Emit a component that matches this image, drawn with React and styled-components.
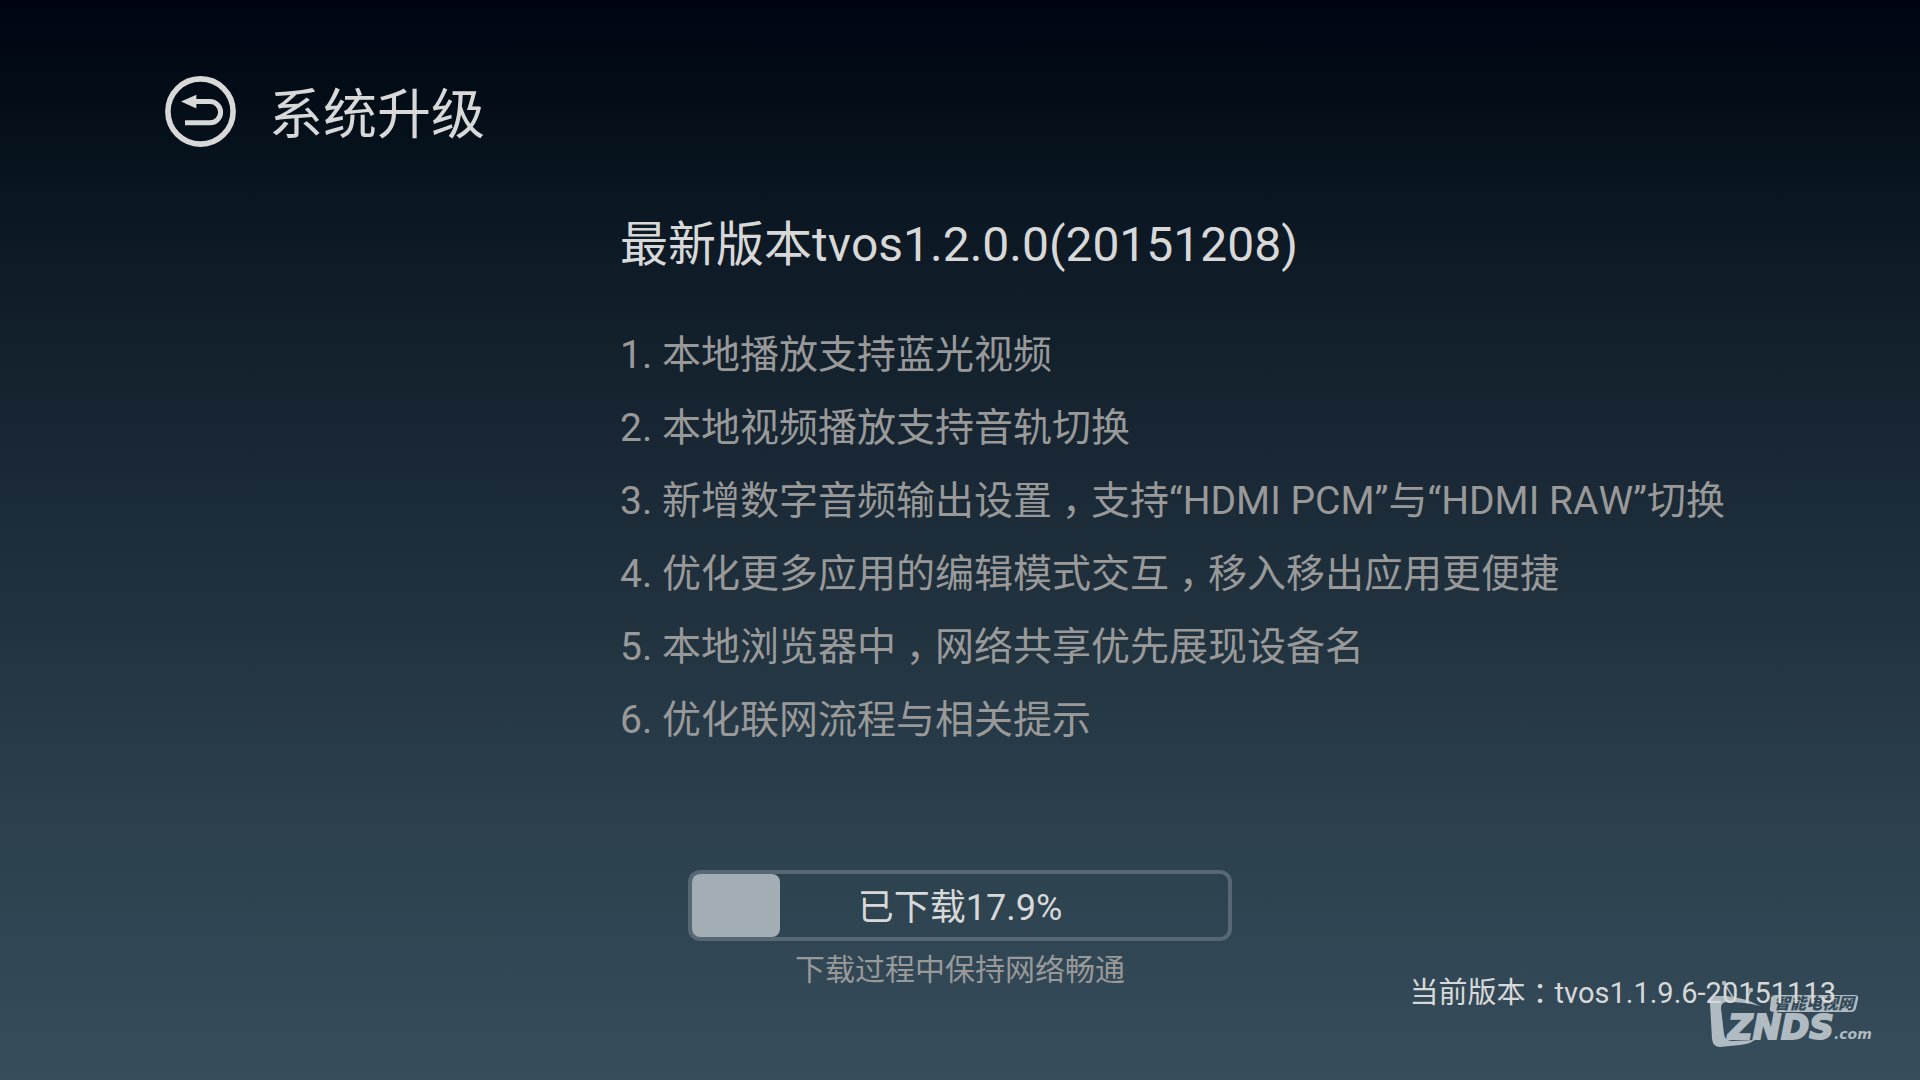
import React from "react";
import styled, { createGlobalStyle } from "styled-components";

const GlobalStyle = createGlobalStyle`
  * { box-sizing: border-box; }
  body {
    margin: 0;
    background: #000411;
    font-family: Roboto, "Noto Sans CJK SC", sans-serif;
    font-kerning: none;
    color: #d8d8d8;
  }
`;

const Screen = styled.div`
  position: relative;
  display: flex;
  flex-direction: column;
  min-height: 100vh;
  background: linear-gradient(
    #000412 0%,
    #030e18 10%,
    #0f1c28 25%,
    #1d2d39 50%,
    #2b3f4c 75%,
    #364d5b 100%
  );
`;

const Header = styled.header`
  display: flex;
  align-items: center;
  gap: 32px;
  padding: 72px 80px 0 164px;
`;

const BackButton = styled.button`
  display: flex;
  padding: 0;
  border: 0;
  background: none;
  color: inherit;
  cursor: pointer;
`;

const PageTitle = styled.h1`
  margin: 0;
  padding-top: 10px;
  font-size: 54px;
  font-weight: 400;
  line-height: 68px;
`;

const Release = styled.main`
  flex: 1;
  padding: 61px 80px 32px 620px;
`;

const ReleaseTitle = styled.h2`
  margin: 0 0 40px;
  font-size: 48px;
  font-weight: 400;
  line-height: 68px;
`;

const ChangeList = styled.ol`
  margin: 0;
  padding: 0;
  list-style: none;
  color: #999;
`;

const Change = styled.li`
  font-size: 39px;
  line-height: 73px;
`;

const WideMark = styled.span`
  display: inline-block;
  width: 1em;
  text-align: center;
  font-feature-settings: "halt";
`;

const Download = styled.section`
  display: flex;
  flex-direction: column;
  align-items: center;
  gap: 7px;
`;

const Track = styled.div`
  display: grid;
  width: 544px;
  height: 71px;
  border: 4px solid #576874;
  border-radius: 12px;
`;

const Fill = styled.div`
  grid-area: 1 / 1;
  border-radius: 8px;
  background: #a3adb4;
`;

const TrackLabel = styled.span`
  grid-area: 1 / 1;
  place-self: end center;
  font-size: 36px;
  line-height: 58px;
`;

const Hint = styled.p`
  margin: 0;
  font-size: 30px;
  line-height: 44px;
  color: #999;
`;

const Footer = styled.footer`
  display: flex;
  justify-content: flex-end;
  height: 88px;
  padding-right: 84px;
`;

const Version = styled.p`
  position: relative;
  z-index: 1;
  margin: -19px 0 0;
  font-size: 29px;
  line-height: 40px;
`;

const Watermark = styled.svg`
  position: absolute;
  right: 40px;
  bottom: 20px;
  overflow: visible;
`;

const changes = [
  "本地播放支持蓝光视频",
  "本地视频播放支持音轨切换",
  "新增数字音频输出设置，支持“HDMI PCM”与“HDMI RAW”切换",
  "优化更多应用的编辑模式交互，移入移出应用更便捷",
  "本地浏览器中，网络共享优先展现设备名",
  "优化联网流程与相关提示",
];

function Text({ children }) {
  return children
    .split(/([，：])/)
    .map((part, i) => (i % 2 ? <WideMark key={i}>{part}</WideMark> : part));
}

function BackIcon() {
  return (
    <svg width="73" height="73" viewBox="0 0 73 73" fill="none" aria-hidden="true">
      <circle cx="36.5" cy="36.5" r="32.6" stroke="#d8d8d8" strokeWidth="5.6" />
      <path
        d="M31 26.6H46A10.6 10.6 0 0 1 46 47.8H21"
        stroke="#d8d8d8"
        strokeWidth="5"
      />
      <path d="M17 26.6L32.4 19.8V33.4Z" fill="#d8d8d8" />
    </svg>
  );
}

function Logo() {
  const face = "'DejaVu Sans', sans-serif";
  return (
    <Watermark width="172" height="76" viewBox="0 0 172 76" role="img" aria-label="智能电视网 ZNDS.com">
      <g fill="#b0bac1">
        <path d="M2 20Q1 14 7 12L19 12Q38 14 52 22Q37 18 19 18Q13 18 13 24L16 50Q17 57 24 57L47 56Q42 60 32 61L12 63Q5 63 4 55Z" />
        <circle cx="16" cy="-1" r="2.2" />
        <circle cx="43" cy="6" r="2.2" />
        <path d="M16 -1L26 15M43 6L38 17" stroke="#b0bac1" strokeWidth="1.6" />
        <path
          fillRule="evenodd"
          d="M63 14Q64 11 68 11H147Q151 11 150 15L148 24Q147 28 143 28H70L65 31L66 28Q61 28 62 24Z"
        />
        <text x="20" y="55" fontFamily={face} fontWeight="700" fontStyle="italic" fontSize="34" stroke="#b0bac1" strokeWidth="2">
          ZNDS
        </text>
        <text x="126" y="55" fontFamily={face} fontWeight="700" fontStyle="italic" fontSize="14">
          .com
        </text>
      </g>
      <text x="66" y="25" fontFamily="'Noto Sans CJK SC', sans-serif" fontWeight="900" fontStyle="italic" fontSize="16" fill="#344a58">
        智能电视网
      </text>
    </Watermark>
  );
}

export default function App() {
  const filled = 16.4;
  return (
    <Screen lang="zh-CN">
      <GlobalStyle />
      <Header>
        <BackButton type="button" aria-label="返回">
          <BackIcon />
        </BackButton>
        <PageTitle>系统升级</PageTitle>
      </Header>
      <Release>
        <ReleaseTitle>最新版本tvos1.2.0.0(20151208)</ReleaseTitle>
        <ChangeList>
          {changes.map((change, i) => (
            <Change key={change}>
              {i + 1}. <Text>{change}</Text>
            </Change>
          ))}
        </ChangeList>
      </Release>
      <Download>
        <Track role="progressbar" aria-label="下载进度" aria-valuenow={17.9} aria-valuemin={0} aria-valuemax={100}>
          <Fill style={{ width: `${filled}%` }} />
          <TrackLabel>已下载17.9%</TrackLabel>
        </Track>
        <Hint>下载过程中保持网络畅通</Hint>
      </Download>
      <Footer>
        <Version>
          <Text>当前版本：tvos1.1.9.6-20151113</Text>
        </Version>
      </Footer>
      <Logo />
    </Screen>
  );
}
